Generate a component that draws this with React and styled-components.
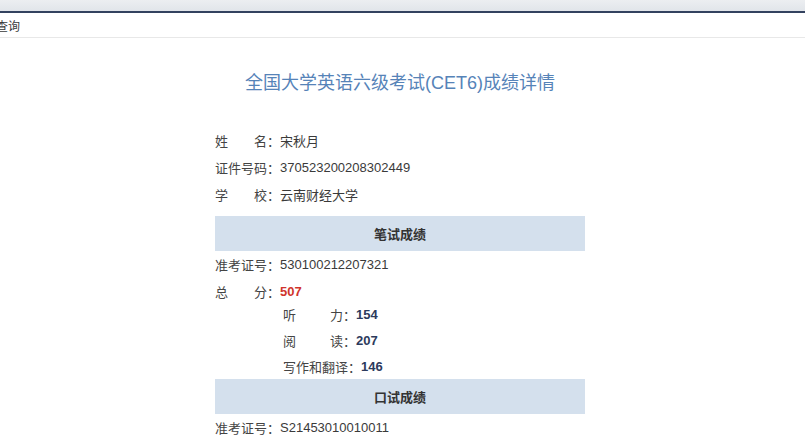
import React from "react";
import styled, { createGlobalStyle } from "styled-components";

const GlobalStyle = createGlobalStyle`
  html, body {
    margin: 0;
    padding: 0;
    background: #ffffff;
    font-family: "Liberation Sans", "Noto Sans CJK SC", sans-serif;
    color: #333;
  }
`

const TopStrip = styled.div`
  height: 11px;
  background: linear-gradient(#eceef1, #e1e5ea);
  border-bottom: 2px solid #33425f;
`

const TabBar = styled.div`
  height: 24px;
  display: flex;
  align-items: center;
  background: #fff;
  border-bottom: 1px solid #e8e8e8;
  font-size: 12px;
  color: #3a3a3a;
  overflow: hidden;
  span{
    margin-left: -4px;
  }
`

const Page = styled.div`
  display: flex;
  justify-content: center;
  padding-right: 5px;
  overflow: hidden;
`

const Content = styled.div`
  width: 370px;
  display: flex;
  flex-direction: column;
`

const Title = styled.h1`
  margin: 33px -40px 32px;
  text-align: center;
  font-size: 18px;
  line-height: 24px;
  font-weight: normal;
  color: #5683b8;
  white-space: nowrap;
`

const Row = styled.div`
  height: ${p => p.$h || 27}px;
  display: flex;
  align-items: center;
  font-size: 13px;
  color: #444;
  padding-left: ${p => p.$indent || 0}px;
`

const Label = styled.span`
  display: inline-block;
  min-width: ${p => p.$w || 52}px;
  text-align-last: justify;
  white-space: nowrap;
`

const Colon = styled.span`
  display: inline-block;
  width: 13px;
`

const Value = styled.span`
  font-weight: ${p => (p.$bold ? "bold" : "normal")};
  color: ${p => p.$color || "#3a3a3a"};
`

const SubScores = styled.div`
  margin-top: -4px;
  display: flex;
  flex-direction: column;
`

const SectionBar = styled.div`
  height: 35px;
  margin-top: ${p => p.$mt || 0}px;
  display: flex;
  align-items: center;
  justify-content: center;
  background: #d4e0ed;
  font-size: 13px;
  font-weight: bold;
  color: #333;
`

const Field = ({ label, value, w, indent, h, bold, color }) => (
    <Row $indent={indent} $h={h}>
        <Label $w={w}>{label}</Label>
        <Colon>：</Colon>
        <Value $bold={bold} $color={color}>{value}</Value>
    </Row>
)

const subScores = [
    { label: "听力", value: "154" },
    { label: "阅读", value: "207" },
    { label: "写作和翻译", value: "146" },
]

const App = () => {
    return (
        <>
            <GlobalStyle />
            <TopStrip />
            <TabBar><span>查询</span></TabBar>
            <Page>
                <Content>
                    <Title>全国大学英语六级考试(CET6)成绩详情</Title>
                    <Field label="姓名" value="宋秋月" />
                    <Field label="证件号码" value="370523200208302449" />
                    <Field label="学校" value="云南财经大学" />

                    <SectionBar $mt={8}>笔试成绩</SectionBar>
                    <Field label="准考证号" value="530100212207321" />
                    <Field label="总分" value="507" bold color="#d0342c" />
                    <SubScores>
                        {subScores.map(s => (
                            <Field
                                key={s.label}
                                label={s.label}
                                value={s.value}
                                w={60}
                                indent={68}
                                h={26}
                                bold
                                color="#2c3a5c"
                            />
                        ))}
                    </SubScores>

                    <SectionBar>口试成绩</SectionBar>
                    <Field label="准考证号" value="S21453010010011" />
                    <Field label="等级" value="B" bold color="#2c3a5c" />
                </Content>
            </Page>
        </>
    );
}

export default App;
